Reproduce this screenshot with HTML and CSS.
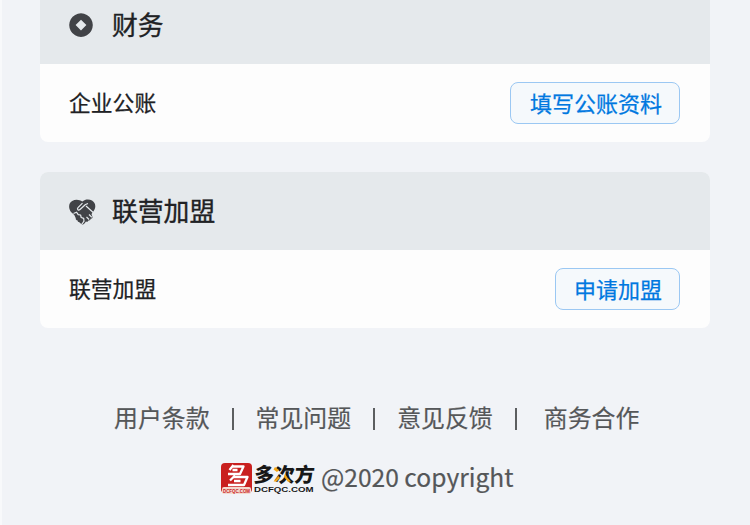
FILE: index.html
```html
<!DOCTYPE html>
<html lang="zh-CN">
<head>
<meta charset="utf-8">
<title>财务</title>
<link rel="stylesheet" href="styles.css">
</head>
<body>
<main class="page">
  <section class="card">
    <header class="card-head">
      <svg class="icon" viewBox="0 0 28 28"><path fill="#414347" fill-rule="evenodd" d="M12 2.300a11.800 11.800 0 1 0 .01 0zM12 8.700l5.400 5.400-5.400 5.400-5.400-5.400z"/></svg>
      <h2>财务</h2>
    </header>
    <div class="row">
      <span>企业公账</span>
      <button class="btn">填写公账资料</button>
    </div>
  </section>
  <section class="card">
    <header class="card-head">
      <svg class="icon" viewBox="0 0 28 28">
        <path fill="#414347" d="M13.300 4.600C16 2.300 20 2 23 3.600c4 2.500 4.200 7.200 1.500 10.600L22.500 17l1 3c.2 1.200-.8 2-1.900 1.700.1 1.200-1 2.100-2.200 1.700-.2 1.100-1.300 1.700-2.400 1.200L15 27c-1 .8-2.300.3-2.700-.6-1 .2-1.900-.4-1.900-1.400-1.200.2-2-.7-1.900-1.700-1.400 0-2-1-1.700-2l-1.500-3.200-3.300-3.200C-.8 11-.5 6 3.200 3.900c3.300-2 7.300-1.500 10.100.7z"/>
        <path class="gap" d="M19 6.500l-2.500 1-5.500 5c-1.700 1.500-3.300-.3-2-1.800l4.500-4.500"/>
        <path class="gap" d="M17 9l7.500 6.800M4.500 16.500l3-1.300 1.700 2.400 2.400.4.600 2.500 2.500.9.300 2.800-2 2.800M17.500 20l2.600 2.500M20 17.500l2.800 2.700"/>
      </svg>
      <h2>联营加盟</h2>
    </header>
    <div class="row">
      <span>联营加盟</span>
      <button class="btn">申请加盟</button>
    </div>
  </section>
  <footer class="footer">
    <nav class="links">
      <a>用户条款</a><i></i><a>常见问题</a><i></i><a>意见反馈</a><i></i><a class="last">商务合作</a>
    </nav>
    <div class="copy">
      <svg class="logo" viewBox="0 0 96 40">
        <rect x="1" y="5" width="31" height="30" rx="4" fill="#c9201f"/>
        <rect x="2" y="29" width="29" height="7" rx="2" fill="#f3d9cf"/>
        <g fill="none" stroke="#fff" stroke-width="2.300" stroke-linejoin="round"><path d="M13.500 7l-4 5M12 8.500h11.500l-3.500 7.500H8M12.500 12h5M15 17.500l-5 5M13 19h14.500l-3.500 8H8M14 23h6.500"/></g>
        <text class="tag" x="3" y="35" textLength="27" lengthAdjust="spacingAndGlyphs">DCFQC.COM</text>
        <g class="brand" transform="translate(0 23.500) skewX(-5)"><text x="33.500" y="0">多</text><text x="54" y="0">次</text><text x="74" y="0">方</text></g>
        <path d="M55 9l4 3-2 2-3.500-2.500zM53.500 23.500l5-5.500 1.500 2-3.500 3.500z" fill="#f2a516"/>
        <path d="M65 15.500l2.500 4.200L71 23.500l-3 .2-4-4.700z" fill="#f2a516"/>
        <text class="domain" x="34" y="34" textLength="59.500" lengthAdjust="spacingAndGlyphs">DCFQC.COM</text>
      </svg>
      <span>@2020 copyright</span>
    </div>
  </footer>
</main>
</body>
</html>
```
FILE: styles.css
```css
* { box-sizing: border-box; }
body {
  margin: 0;
  height: 525px;
  overflow: hidden;
  background: #f1f3f7;
  color: #202124;
  font-family: "Noto Sans CJK SC", sans-serif;
}
.page {
  height: 525px;
  padding: 0 40px 0 38px;
  border-left: 2px solid #f8f9fb;
  overflow: hidden;
}
.card {
  height: 156px;
  margin-bottom: 30px;
  border-radius: 8px;
  overflow: hidden;
  background: #fdfdfd;
}
.card:first-child { margin-top: -14px; }
.card-head {
  height: 78px;
  padding: 0 29px;
  display: flex;
  align-items: center;
  gap: 15px;
  background: #e5e9ec;
}
.icon { width: 28px; height: 28px; flex: none; }
.gap { fill: none; stroke: #e5e9ec; stroke-width: 1.2; stroke-linejoin: round; }
h2 {
  margin: 0;
  padding-bottom: 2px;
  font-size: 25.8px;
  line-height: 38px;
  font-weight: 400;
  -webkit-text-stroke: .35px;
}
.row {
  height: 78px;
  padding: 0 30px 0 29px;
  display: flex;
  align-items: center;
  justify-content: space-between;
  font-size: 21.8px;
  -webkit-text-stroke: .25px;
}
.row span { padding-bottom: 4px; }
.btn {
  height: 42px;
  padding: 0 17px 2px 19px;
  border: 1px solid #9bc8f3;
  border-radius: 8px;
  background: #f5f9fc;
  color: #0078e0;
  font: 400 22px/38px "Noto Sans CJK SC", sans-serif;
  -webkit-text-stroke: .25px;
}
.card:nth-child(2) .btn { padding-left: 18px; }
.footer { color: #555759; font-size: 23.9px; -webkit-text-stroke: .2px; }
.links {
  margin-top: 71px;
  padding-left: 74px;
  height: 40px;
  display: flex;
  align-items: center;
}
.links a { padding-bottom: 5px; }
.links i { width: 2px; height: 22px; margin: 0 22px; background: #5c5e60; }
.links .last { margin-left: 5px; }
.copy {
  margin-top: 19px;
  padding-left: 180px;
  height: 40px;
  display: flex;
  align-items: center;
  gap: 5px;
  font-size: 24.6px;
}
.copy span { padding-bottom: 4px; }
.logo { width: 96px; height: 40px; flex: none; overflow: visible; -webkit-text-stroke: 0; }
.tag { font: 700 6px "Liberation Sans", sans-serif; fill: #c9201f; }
.brand { font: 900 20px "Noto Sans CJK SC", sans-serif; fill: #171717; }
.domain { font: 700 7.5px "Liberation Sans", sans-serif; fill: #171717; }
```
